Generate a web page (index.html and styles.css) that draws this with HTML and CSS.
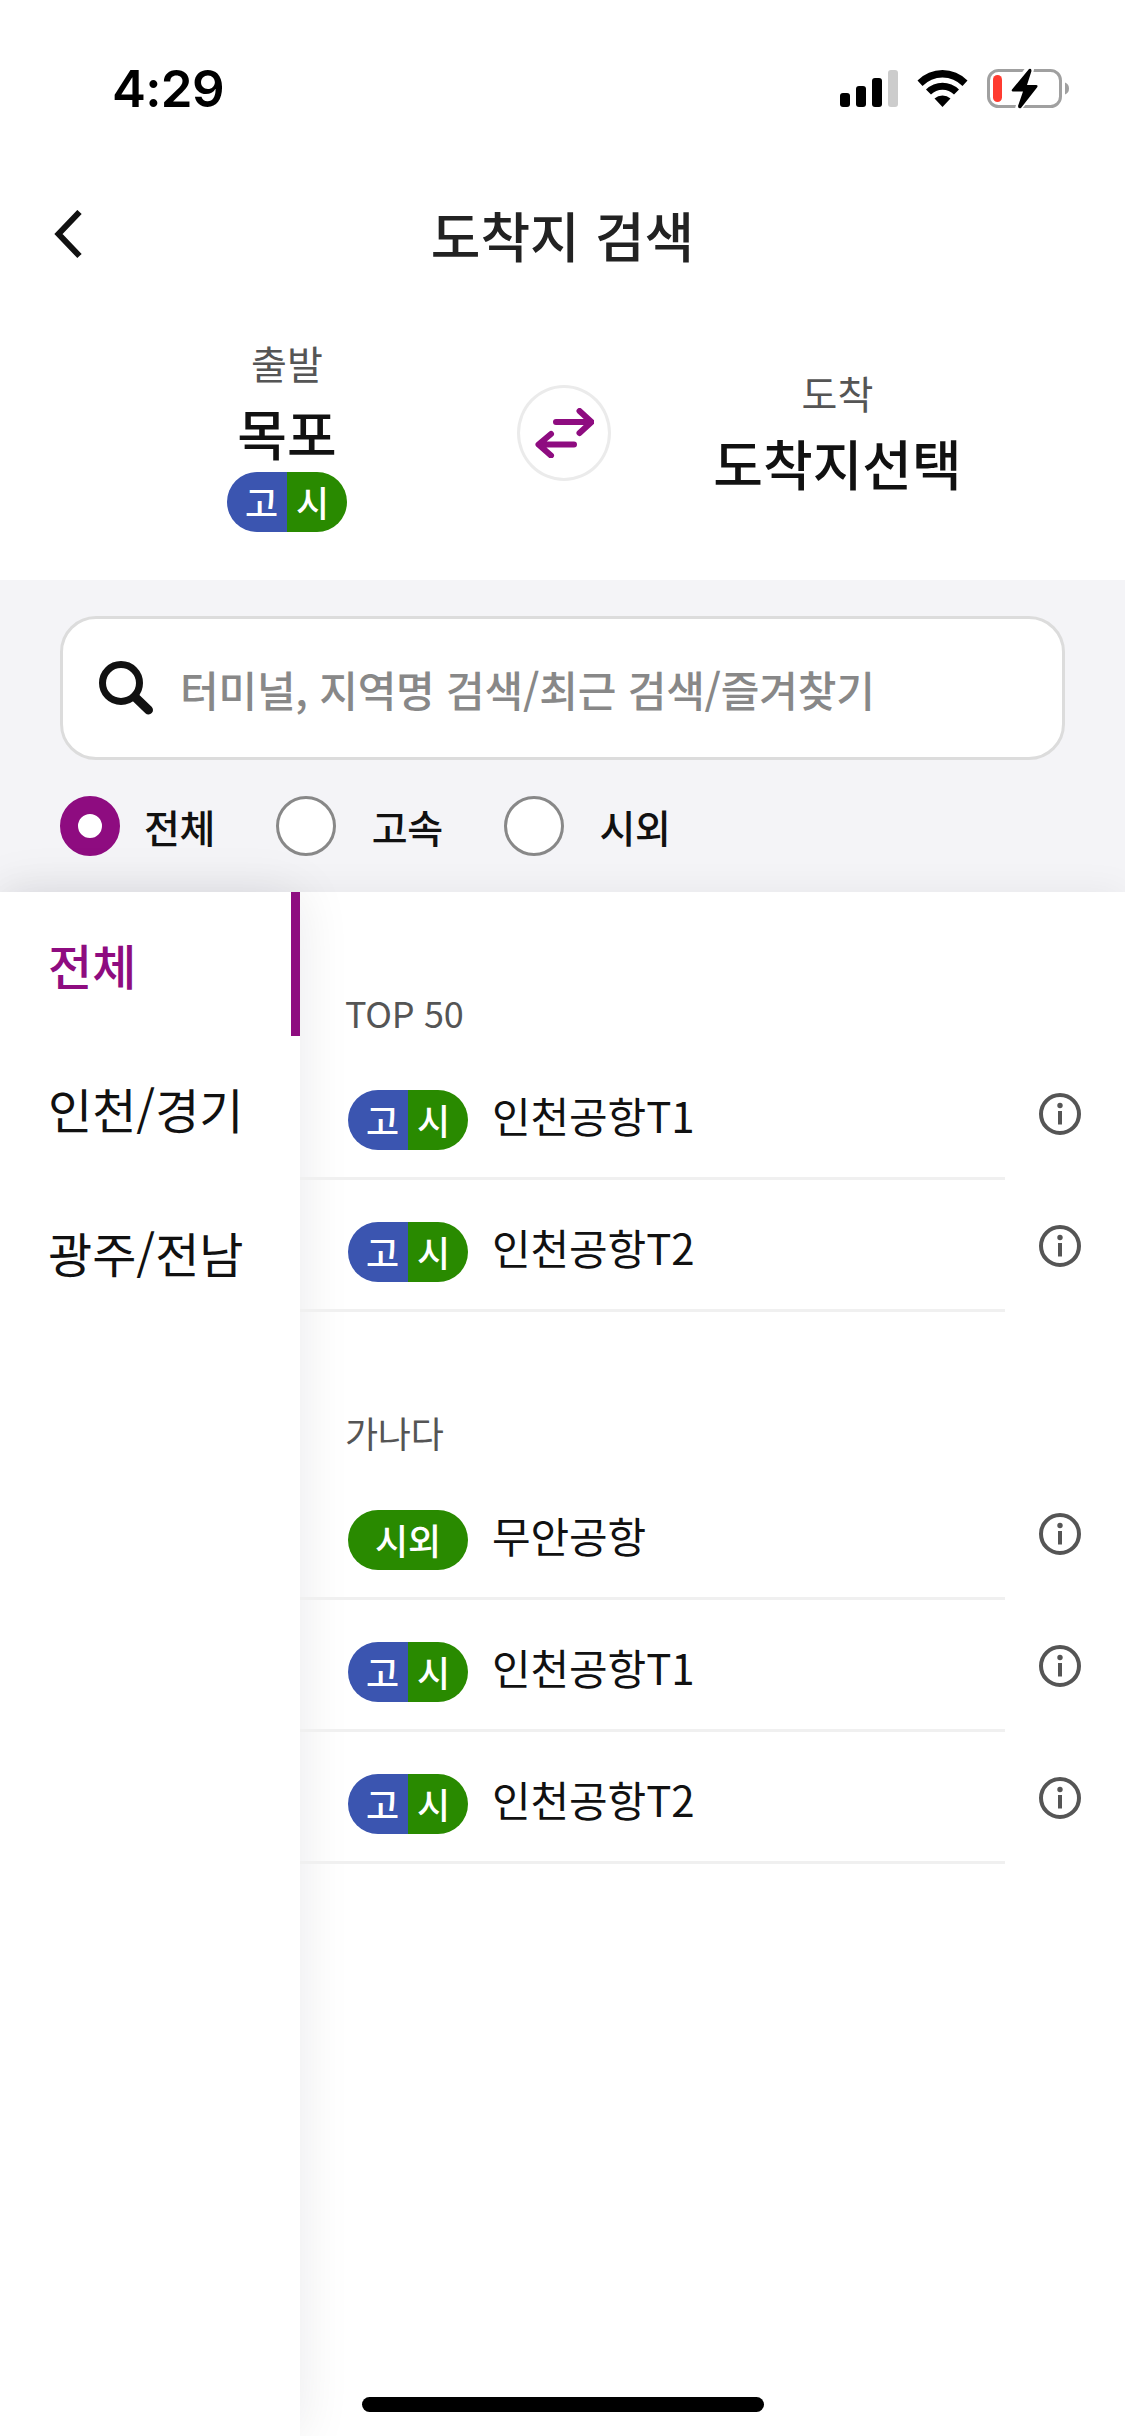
FILE: index.html
```html
<!DOCTYPE html>
<html lang="ko">
<head>
    <meta charset="UTF-8">
    <meta name="viewport" content="width=device-width, initial-scale=1.0">
    <title>도착지 검색</title>
    <link rel="stylesheet" href="styles.css">
</head>
<body>
    <div class="status-bar">
        <span class="time">4:29</span>
        <svg class="status-icons" width="230" height="42" viewBox="0 0 230 42">
            <!-- signal -->
            <rect x="0" y="24" width="10" height="14" rx="3"/>
            <rect x="16" y="17" width="10" height="21" rx="3"/>
            <rect x="32" y="9" width="10" height="29" rx="3"/>
            <rect x="48" y="1" width="10" height="37" rx="3" fill="#ccc"/>
            <!-- wifi -->
            <path d="M77.500 11.500A35 35 0 0 1 127.500 11.500L122.500 17A28 28 0 0 0 82.500 17Z"/>
            <path d="M86 20.500A23.500 23.500 0 0 1 119 20.500L114 25.500A16.500 16.500 0 0 0 91 25.500Z"/>
            <path d="M94.500 29.500A12 12 0 0 1 110.500 29.500L102.500 38Z"/>
            <!-- battery -->
            <rect x="148.500" y="1.500" width="72" height="36" rx="10" fill="none" stroke="#a0a0a0" stroke-width="3"/>
            <path d="M225 13.500Q229 15 229 19.500T225 25.500Z" fill="#a0a0a0"/>
            <rect x="153" y="6" width="9" height="27" rx="4.500" fill="#ff3b30"/>
            <path d="M189 -1L172 21.500H183L178 40L198 16.500H187L191 0Z" stroke="#fff" stroke-width="6"/>
            <path d="M189 0L172 20.500Q171 22.500 173 22.500H183L178 37Q178 40 181 39L197 18.500Q198.500 16 196 16H187L191.500 2Q191.500 -1 189 0Z"/>
        </svg>
    </div>

    <header class="header">
        <svg class="back" width="30" height="50" viewBox="0 0 30 50">
            <path d="M25.500 2L4.500 24L25.500 46" fill="none" stroke="#111" stroke-width="6"/>
        </svg>
        <h1>도착지 검색</h1>
    </header>

    <div class="route">
        <div class="stop">
            <span class="label">출발</span>
            <strong>목포</strong>
            <div class="badge"><i class="express">고</i><i class="inter">시</i></div>
        </div>
        <button class="swap">
            <svg width="60" height="50" viewBox="0 0 60 50" fill="none" stroke="#8e0c80" stroke-width="6" stroke-linecap="round" stroke-linejoin="round">
                <path d="M22 14H57M45.500 3L57.500 14L45.500 25"/>
                <path d="M40 36.500H5M17 26L4.500 36.500L17 47.500"/>
            </svg>
        </button>
        <div class="stop">
            <span class="label">도착</span>
            <strong>도착지선택</strong>
        </div>
    </div>

    <div class="search">
        <div class="search-box">
            <svg width="56" height="54" viewBox="0 0 56 54" fill="none" stroke="#111">
                <circle cx="24" cy="22" r="18.500" stroke-width="7"/>
                <path d="M38 36L51.500 49" stroke-width="9" stroke-linecap="round"/>
            </svg>
            <span>터미널, 지역명 검색/최근 검색/즐겨찾기</span>
        </div>
        <div class="filters">
            <label class="checked"><b></b>전체</label>
            <label><b></b>고속</label>
            <label><b></b>시외</label>
        </div>
    </div>

    <div class="content">
        <ul class="regions">
            <li class="active">전체</li>
            <li>인천/경기</li>
            <li>광주/전남</li>
        </ul>
        <div class="terminals">
            <h2>TOP 50</h2>
            <div class="row">
                <div class="badge"><i class="express">고</i><i class="inter">시</i></div>
                <span class="name">인천공항T1</span>
                <svg class="info" viewBox="0 0 44 44"><circle cx="22" cy="22" r="19"/><path d="M22 19V32.500"/><circle class="dot" cx="22" cy="13.500" r="2.700"/></svg>
            </div>
            <div class="row">
                <div class="badge"><i class="express">고</i><i class="inter">시</i></div>
                <span class="name">인천공항T2</span>
                <svg class="info" viewBox="0 0 44 44"><circle cx="22" cy="22" r="19"/><path d="M22 19V32.500"/><circle class="dot" cx="22" cy="13.500" r="2.700"/></svg>
            </div>
            <h2>가나다</h2>
            <div class="row">
                <div class="badge"><i class="inter only">시외</i></div>
                <span class="name">무안공항</span>
                <svg class="info" viewBox="0 0 44 44"><circle cx="22" cy="22" r="19"/><path d="M22 19V32.500"/><circle class="dot" cx="22" cy="13.500" r="2.700"/></svg>
            </div>
            <div class="row">
                <div class="badge"><i class="express">고</i><i class="inter">시</i></div>
                <span class="name">인천공항T1</span>
                <svg class="info" viewBox="0 0 44 44"><circle cx="22" cy="22" r="19"/><path d="M22 19V32.500"/><circle class="dot" cx="22" cy="13.500" r="2.700"/></svg>
            </div>
            <div class="row">
                <div class="badge"><i class="express">고</i><i class="inter">시</i></div>
                <span class="name">인천공항T2</span>
                <svg class="info" viewBox="0 0 44 44"><circle cx="22" cy="22" r="19"/><path d="M22 19V32.500"/><circle class="dot" cx="22" cy="13.500" r="2.700"/></svg>
            </div>
        </div>
    </div>
    <div class="home-indicator"></div>
</body>
</html>
```
FILE: styles.css
```css
* {
    box-sizing: border-box;
    margin: 0;
    padding: 0;
}
body {
    width: 1125px;
    height: 2436px;
    display: flex;
    flex-direction: column;
    overflow: hidden;
    background: #fff;
    color: #111;
    font-family: "Noto Sans CJK KR", sans-serif;
    position: relative;
}
.status-bar {
    height: 172px;
    padding: 69px 55px 0 112px;
    display: flex;
    justify-content: space-between;
    align-items: flex-start;
}
.time {
    font-family: Inter, sans-serif;
    font-size: 51px;
    font-weight: 600;
    line-height: 40px;
    letter-spacing: -0.7px;
    color: #000;
}
.status-icons {
    overflow: visible;
}
.header {
    height: 126px;
    padding: 0 54px;
    display: grid;
    grid-template-columns: 30px 1fr 30px;
    align-items: center;
}
h1 {
    font-size: 54px;
    font-weight: 500;
    line-height: 80px;
    text-align: center;
    color: #222;
}
.route {
    height: 282px;
    display: grid;
    grid-template-columns: 517px 94px 1fr;
    padding-bottom: 12px;
    align-items: center;
}
.stop {
    display: flex;
    flex-direction: column;
    align-items: center;
}
.stop:first-child {
    padding-left: 57px;
}
.stop:last-child {
    padding-right: 61px;
}
.label {
    margin-bottom: 4px;
    font-size: 39px;
    line-height: 56px;
    color: #555;
}
.stop strong {
    font-size: 54px;
    font-weight: 500;
    line-height: 78px;
}
.badge {
    width: 120px;
    height: 60px;
    display: flex;
    flex: none;
    border-radius: 30px;
    overflow: hidden;
}
.badge i {
    width: 60px;
    height: 60px;
    font-size: 36px;
    font-style: normal;
    font-weight: 500;
    line-height: 58px;
    color: #fff;
}
.badge .express {
    background: #3b55b0;
    padding-left: 18px;
}
.badge .inter {
    background: #298a00;
    padding-left: 9px;
}
.badge .only {
    width: 120px;
    padding: 0;
    text-align: center;
}
.swap {
    width: 94px;
    height: 96px;
    display: flex;
    justify-content: center;
    align-items: center;
    border: 3px solid #ebebeb;
    border-radius: 50%;
    background: #fff;
}
.search {
    height: 312px;
    padding: 36px 60px 0;
    background: #f4f4f7;
}
.search-box {
    height: 144px;
    padding: 0 34px;
    display: flex;
    align-items: center;
    gap: 27px;
    background: #fff;
    border: 3px solid #dcdcdc;
    border-radius: 36px;
    font-size: 42px;
    font-weight: 500;
    letter-spacing: -0.2px;
    color: #888;
}
.filters {
    display: flex;
    margin-top: 36px;
}
.filters label {
    display: flex;
    align-items: center;
    gap: 36px;
    height: 60px;
    margin-right: 61px;
    font-size: 39px;
    font-weight: 500;
    letter-spacing: -0.5px;
}
.filters .checked {
    gap: 24px;
}
.filters b {
    width: 60px;
    height: 60px;
    border: 3px solid #888;
    border-radius: 50%;
    background: #fff;
}
.filters .checked b {
    border: 18px solid #8e0c80;
}
.content {
    flex: 1;
    display: flex;
    background: #fff;
    box-shadow: 0 0 36px rgba(0, 0, 0, 0.06);
}
.regions {
    width: 300px;
    list-style: none;
    background: #fff;
    box-shadow: 0 0 50px rgba(0, 0, 30, 0.09);
}
.regions li {
    height: 144px;
    padding-left: 48px;
    font-size: 48px;
    line-height: 144px;
}
.regions .active {
    font-weight: 500;
    color: #8e0c80;
    border-right: 9px solid #8e0c80;
}
.terminals {
    flex: 1;
    padding-top: 48px;
}
h2 {
    height: 108px;
    padding: 45px 0 0 45px;
    font-size: 36px;
    font-weight: 400;
    line-height: 54px;
    letter-spacing: -0.3px;
    color: #555;
}
.row + h2 {
    margin-top: 48px;
}
.row {
    height: 132px;
    display: flex;
    align-items: center;
    padding: 0 43px 0 48px;
    background: linear-gradient(#f0f0f0, #f0f0f0) 0 100% / 705px 3px no-repeat;
}
.row .badge {
    margin-top: 12px;
}
.name {
    margin-left: 24px;
    font-size: 42px;
    letter-spacing: -0.1px;
}
.info {
    width: 44px;
    height: 44px;
    margin-left: auto;
    fill: none;
    stroke: #555;
    stroke-width: 4;
}
.info .dot {
    fill: #555;
    stroke: none;
}
.home-indicator {
    position: absolute;
    left: 362px;
    bottom: 24px;
    width: 402px;
    height: 15px;
    border-radius: 8px;
    background: #000;
}
```
